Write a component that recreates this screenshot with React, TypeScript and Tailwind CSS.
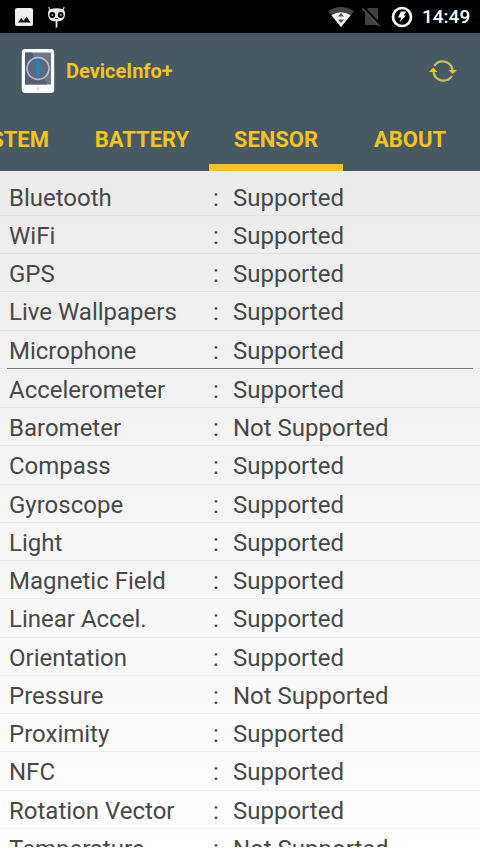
const hardware = [
  { name: 'Bluetooth', supported: true },
  { name: 'WiFi', supported: true },
  { name: 'GPS', supported: true },
  { name: 'Live Wallpapers', supported: true },
  { name: 'Microphone', supported: true },
];

const sensors = [
  { name: 'Accelerometer', supported: true },
  { name: 'Barometer', supported: false },
  { name: 'Compass', supported: true },
  { name: 'Gyroscope', supported: true },
  { name: 'Light', supported: true },
  { name: 'Magnetic Field', supported: true },
  { name: 'Linear Accel.', supported: true },
  { name: 'Orientation', supported: true },
  { name: 'Pressure', supported: false },
  { name: 'Proximity', supported: true },
  { name: 'NFC', supported: true },
  { name: 'Rotation Vector', supported: true },
  { name: 'Temperature', supported: false },
];

function StatusBar() {
  return (
    <div className="flex h-[33px] items-center bg-black text-white">
      <svg className="ml-[15px] h-[18px] w-[18px]" viewBox="0 0 18 18">
        <rect width="18" height="18" rx="2" fill="#eee" />
        <path d="M3 14.5 6.2 10l2.3 2.7 3-4.2 4 6z" fill="#111" />
      </svg>
      <svg className="ml-[14px] h-[22px] w-[19px]" viewBox="0 0 19 22" fill="#e8e8e8">
        <path d="M3 4 1.8 1M16 4l1.2-3" stroke="#ccc" strokeWidth="1.3" />
        <path d="M3 3.2Q9.500 1.500 16 3.200Q18.500 5 18 9Q17.500 14 13 15.200H6Q1.500 14 1 9Q.5 5 3 3.200Z" />
        <circle cx="5.300" cy="9" r="2.900" fill="#000" />
        <circle cx="13.700" cy="9" r="2.900" fill="#000" />
        <circle cx="5.300" cy="9" r="1" fill="#aaa" />
        <circle cx="13.700" cy="9" r="1" fill="#aaa" />
        <path d="M8 12.500h3" stroke="#333" />
        <path d="M9.500 15v6.500" stroke="#e8e8e8" strokeWidth="1.800" />
      </svg>
      <svg className="ml-auto h-[20px] w-[26px]" viewBox="0 0 26 20">
        <path d="M0 4.300Q13-4.500 26 4.300L13 20Z" fill="#444" />
        <path d="M3.500 8.200Q13 2.500 22.500 8.200L13 20Z" fill="#f2f2f2" />
        <path d="m10 9.500 3-3.500 3 3.500zM10 12.500h6L13 16z" fill="#555" />
      </svg>
      <svg className="ml-[8px] h-[20px] w-[19px]" viewBox="0 0 19 20">
        <path d="M6 1h10v17H3V4z" fill="#424242" />
        <path d="m1 0 17 18" stroke="#000" strokeWidth="3" />
        <path d="M.5 1.500 17.500 19" stroke="#505050" strokeWidth="1.700" />
      </svg>
      <svg className="ml-[10px] h-[22px] w-[22px]" viewBox="0 0 22 22">
        <circle cx="11" cy="11" r="9" fill="none" stroke="#fff" strokeWidth="2.700" />
        <path d="M10 5.500h5l-2.200 4H15L8.800 16l1.300-4.500H7z" fill="#fff" />
      </svg>
      <span className="ml-[9px] mr-[11px] w-[47px] whitespace-nowrap text-[19px] font-medium leading-[33px]">14:49</span>
    </div>
  );
}

function AppBar() {
  return (
    <div className="flex h-[75px] items-center pl-[21px] pr-[23px]">
      <svg className="h-[46px] w-[34px]" viewBox="0 0 34 46">
        <rect x=".8" y="1" width="32.400" height="44" rx="3.500" fill="#fafcfe" />
        <rect x="4" y="4.500" width="26" height="32" fill="#6f7687" />
        <path d="M4 4.500h7L26 36.500H4z" fill="#565e70" />
        <circle cx="17" cy="20.500" r="11" fill="#5d6880" stroke="#b9c0cf" strokeWidth="1.500" />
        <path d="M14.500 12.500h3.500q2.300 8 .3 16h-2.500q-1.500-4-.5-8z" fill="#2484bd" />
        <circle cx="17" cy="41" r="1.700" fill="#dcdde1" />
      </svg>
      <h1 className="ml-[11px] text-[20px] font-bold leading-6 text-[#f4c320]">DeviceInfo+</h1>
      <svg className="ml-auto h-[26px] w-[28px]" viewBox="0 0 28 26" fill="none">
        <path d="M5.200 8A10 10 0 0 1 23.500 12" stroke="#c9bd55" strokeWidth="2.300" />
        <path d="M22.800 18A10 10 0 0 1 4.500 14" stroke="#c9bd55" strokeWidth="2.300" />
        <path d="M19.500 12H28l-4.300 4zM0 14h8.500l-4.200-4.500z" fill="#f6c420" />
      </svg>
    </div>
  );
}

function Tabs() {
  return (
    <nav className="flex h-[63px] overflow-hidden text-[22px] font-bold leading-[63px] text-[#f4c320]">
      <div className="flex w-[75px] shrink-0 justify-end pr-[26px]">SYSTEM</div>
      <div className="w-[134px] shrink-0 text-center">BATTERY</div>
      <div className="h-[63px] w-[134px] shrink-0 border-b-[7px] border-[#fcc116] text-center">SENSOR</div>
      <div className="w-[134px] shrink-0 text-center">ABOUT</div>
    </nav>
  );
}

function Row({ name, supported }: { name: string; supported: boolean }) {
  return (
    <div className="flex h-[38.250px] items-center border-b border-black/5 pl-[9px] pt-[3px]">
      <span className="w-[204px] shrink-0">{name}</span>
      <span className="w-[20px] shrink-0">:</span>
      <span>{supported ? 'Supported' : 'Not Supported'}</span>
    </div>
  );
}

export default function App() {
  return (
    <div className="flex h-[854px] w-[480px] flex-col overflow-hidden bg-white font-['Roboto',sans-serif]">
      <StatusBar />
      <header className="bg-[#475a64]">
        <AppBar />
        <Tabs />
      </header>
      <main className="flex-1 overflow-hidden bg-linear-to-b from-[#ebebeb] to-white pb-[7px]">
        <div className="h-[676px] overflow-hidden pt-[6.500px] text-[24px] leading-7 text-[#484848]">
          {hardware.map((item) => (
            <Row key={item.name} {...item} />
          ))}
          <div className="mx-[7px] -mt-px mb-px h-px bg-[#777]" />
          {sensors.map((item) => (
            <Row key={item.name} {...item} />
          ))}
        </div>
      </main>
    </div>
  );
}
